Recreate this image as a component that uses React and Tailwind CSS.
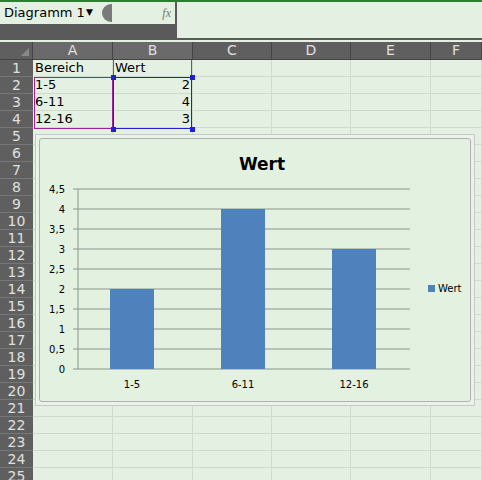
export default function App() {
  const cols = [["A", 80], ["B", 80], ["C", 79], ["D", 79], ["E", 80], ["F", 51]];
  const data = { 1: ["Bereich", "Wert"], 2: ["1-5", "2"], 3: ["6-11", "4"], 4: ["12-16", "3"] };
  const rows = Array.from({ length: 25 }, (_, i) => i + 1);
  const ff = { fontFamily: "Tahoma, 'DejaVu Sans', sans-serif" };
  return (
    <div className="relative w-[482px] h-[480px] overflow-hidden bg-[#e4f1e2] text-[13px] text-black" style={ff}>
      <div className="h-[2px] bg-[#2e7d32]" />
      <div className="flex h-[38px] bg-[#5a5a5a]">
        <div className="w-[175px] flex flex-col">
          <div className="h-[22px] flex items-center bg-[#e4f1e2] whitespace-nowrap">
            <span className="pl-[4px] text-[13px] w-[86px] overflow-hidden">Diagramm 1</span>
            <span className="text-[9px] w-[14px]">▼</span>
            <div className="ml-[2px] w-[10px] h-[18px] rounded-l-full bg-[#7a7a7a]" />
            <div className="flex-1 h-full flex items-center justify-end pr-[4px] text-[#777] italic text-[12px]" style={{ fontFamily: "'Liberation Serif', serif" }}>fx</div>
          </div>
        </div>
        <div className="flex-1 bg-[#e4f1e2] border-l-2 border-[#5a5a5a] mb-[2px]" />
      </div>
      <div className="h-[2px] bg-[#e4f1e2]" />
      <div className="flex h-[18px] bg-[#5f5f5f] text-[#e0e0e0] text-[14px] border-b border-[#444]">
        <div className="w-[33px] border-r border-[#444] relative">
          <div className="absolute right-[3px] bottom-[3px] w-0 h-0 border-l-[8px] border-l-transparent border-b-[8px] border-b-[#8a8a8a]" />
        </div>
        {cols.map(([c, w]) => (
          <div key={c} style={{ width: w }} className={`shrink-0 flex items-center justify-center border-r border-[#444] ${c === "A" || c === "B" ? "bg-[#6a6a6a]" : ""}`}>{c}</div>
        ))}
      </div>
      {rows.map((r) => (
        <div key={r} className="flex h-[17px]">
          <div className="w-[33px] shrink-0 bg-[#5f5f5f] text-[#e0e0e0] text-[14px] flex items-center justify-center border-b border-[#777] leading-none">{r}</div>
          {cols.map(([c, w], ci) => (
            <div key={c} style={{ width: w }} className={`shrink-0 border-r border-b border-[#cfdccc] px-[2px] flex items-center text-[13px] ${ci === 1 && r > 1 ? "justify-end" : ""}`}>
              {data[r] && ci < 2 ? data[r][ci] : ""}
            </div>
          ))}
        </div>
      ))}
      <div className="absolute left-[34px] top-[77px] w-[79px] h-[52px] border border-[#a020a0]" />
      <div className="absolute left-[113px] top-[60px] w-[79px] h-[17px] border-x border-[#2a8a2a]" />
      <div className="absolute left-[113px] top-[77px] w-[79px] h-[52px] border border-[#2020d0]" />
      {[[111, 75], [190, 75], [111, 127], [190, 127]].map(([x, y], i) => (
        <div key={i} className="absolute w-[5px] h-[5px] bg-[#2020d0]" style={{ left: x, top: y }} />
      ))}
      <div className="absolute left-[35px] top-[134px] w-[440px] h-[272px] border border-[#c8c8c8] bg-[#e9f3e7] p-[3px]">
        <div className="w-full h-full border border-[#b0b0b0] rounded-[3px] bg-[#e3f1e1]">
          <svg width="432" height="264" viewBox="0 0 432 264" style={{ fontFamily: "'DejaVu Sans', sans-serif" }}>
            <text x="222" y="31" textAnchor="middle" fontSize="17" fontWeight="bold">Wert</text>
            {[0, 1, 2, 3, 4, 5, 6, 7, 8, 9].map((i) => {
              const y = 230 - i * 20;
              const lab = ["0", "0,5", "1", "1,5", "2", "2,5", "3", "3,5", "4", "4,5"][i];
              return (
                <g key={i}>
                  <line x1="33" x2="370" y1={y} y2={y} stroke="#8a958a" strokeWidth="1" />
                  <text x="25" y={y + 4} textAnchor="end" fontSize="10">{lab}</text>
                </g>
              );
            })}
            <line x1="38" x2="38" y1="50" y2="230" stroke="#8a958a" />
            {[[2, 70, "1-5"], [4, 181, "6-11"], [3, 292, "12-16"]].map(([v, x, l]) => (
              <g key={l}>
                <rect x={x} y={230 - v * 40} width="44" height={v * 40} fill="#4f81bd" />
                <text x={x + 22} y="249" textAnchor="middle" fontSize="10">{l}</text>
              </g>
            ))}
            <rect x="388" y="146" width="7" height="7" fill="#4f81bd" />
            <text x="398" y="153" fontSize="10">Wert</text>
          </svg>
        </div>
      </div>
    </div>
  );
}
